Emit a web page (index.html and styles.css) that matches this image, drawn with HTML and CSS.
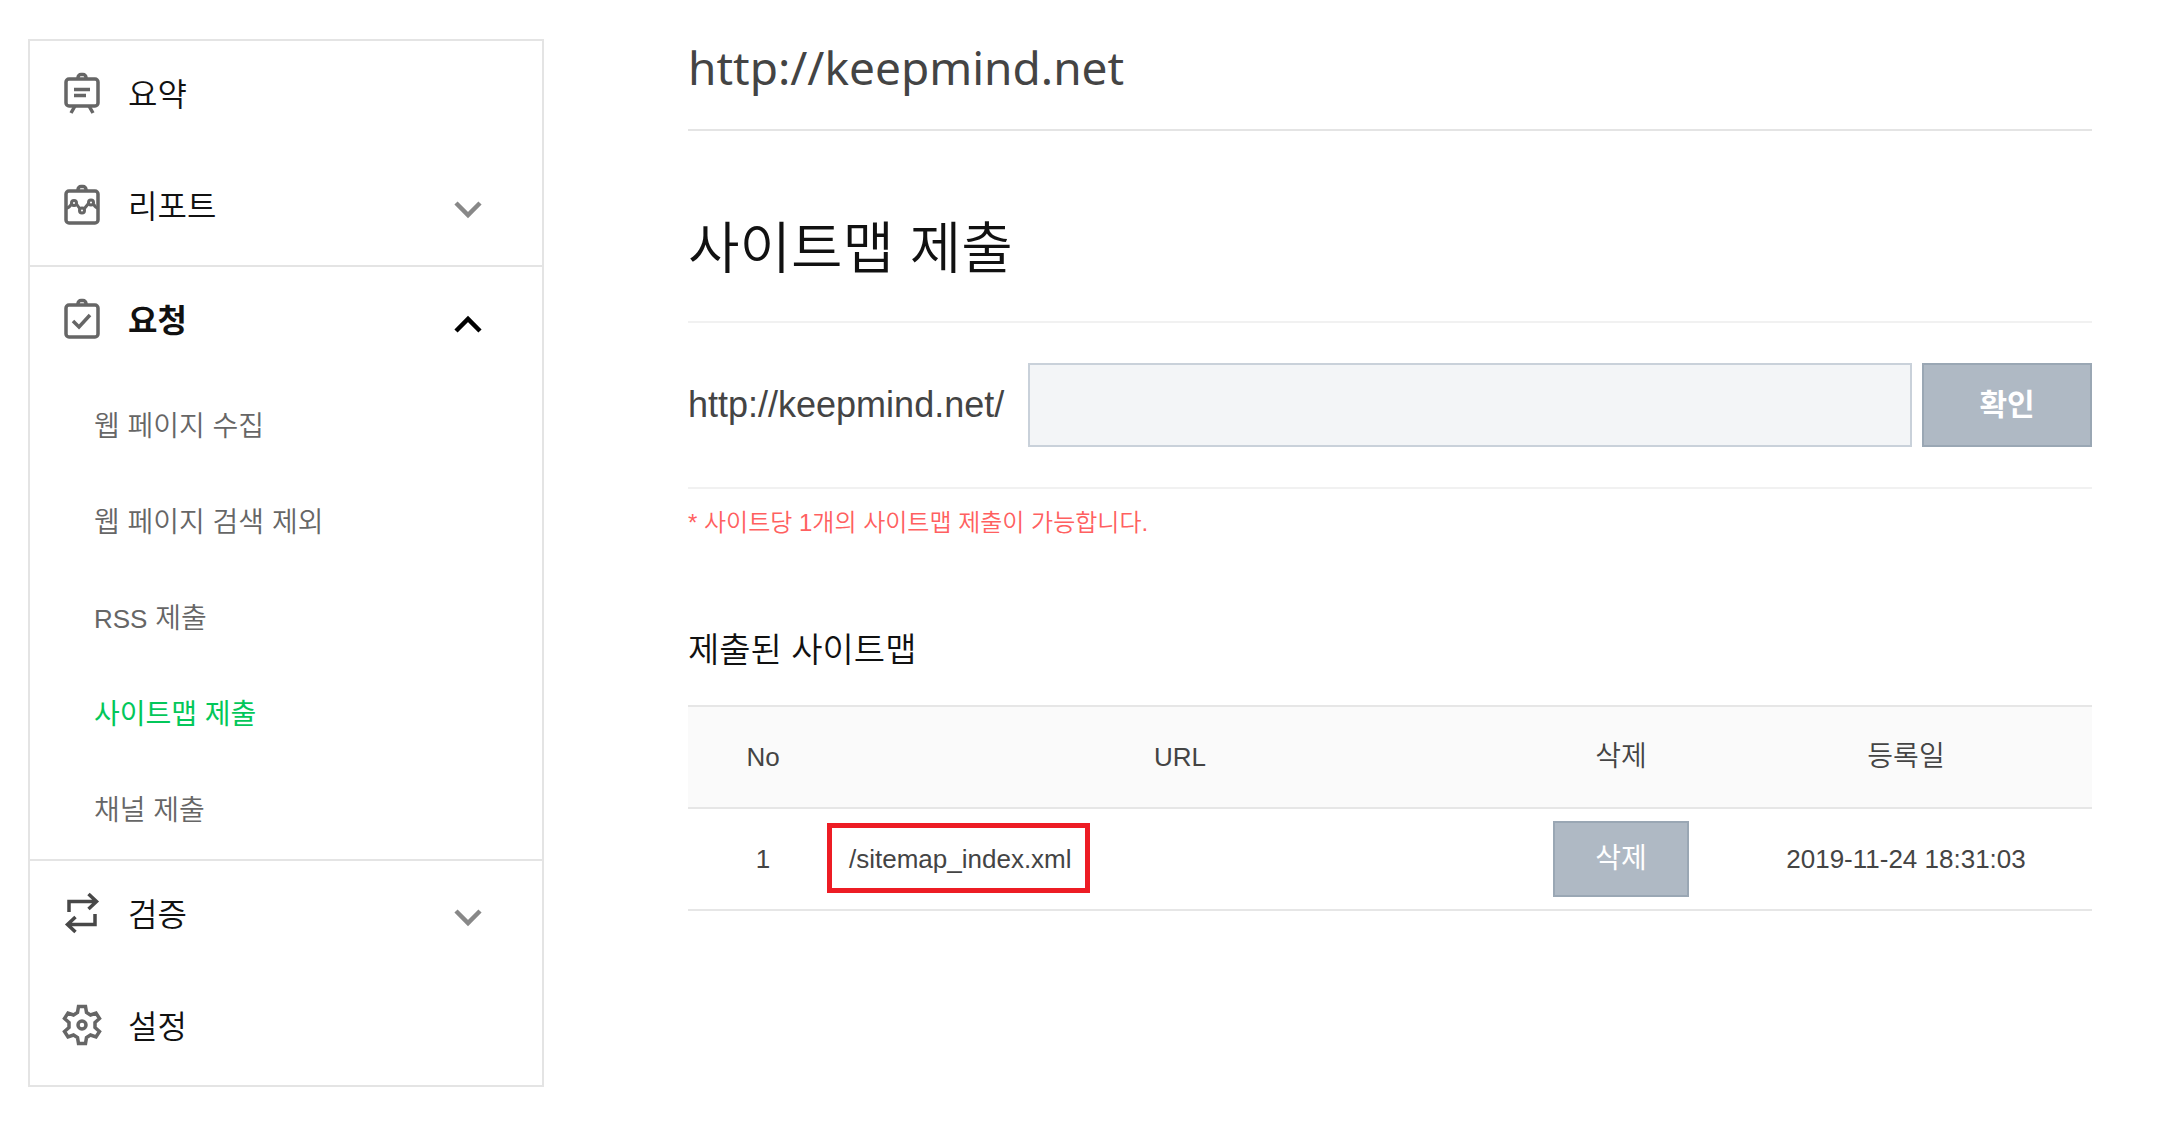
FILE: index.html
```html
<!DOCTYPE html>
<html lang="ko">
<head>
<meta charset="utf-8">
<meta name="viewport" content="width=device-width, initial-scale=1">
<title>사이트맵 제출</title>
<link rel="stylesheet" href="styles.css">
</head>
<body>
<div class="page">
  <nav class="sidebar" aria-label="메뉴">
    <ul class="group">
      <li><a class="item" href="#">
        <svg class="icon" viewBox="0 0 36 40" aria-hidden="true"><rect x="2" y="6" width="32" height="27" rx="3"/><path d="M14 5.500V4.500a3 3 0 0 1 3-3h2a3 3 0 0 1 3 3v1M10 16.500h16M10 22.500h12M11 33 7 40M25 33l4 7"/></svg>
        <span class="label">요약</span></a></li>
      <li><a class="item" href="#">
        <svg class="icon" viewBox="0 0 36 40" aria-hidden="true"><rect x="2" y="6" width="32" height="32" rx="3"/><path d="M14 5.500V4.500a3 3 0 0 1 3-3h2a3 3 0 0 1 3 3v1"/><g class="fine"><circle cx="10" cy="18" r="2.500"/><circle cx="18" cy="25.500" r="2.500"/><circle cx="27" cy="17.500" r="2.500"/><path d="M2 23c3 0 4-2 5.500-4M12.500 19l3.500 5M20 24l4.500-5.500M29.500 19c1 2 2 4 4.500 4"/></g></svg>
        <span class="label">리포트</span>
        <svg class="chevron" viewBox="0 0 28 18" aria-hidden="true"><path d="M2 2l12 12L26 2"/></svg></a></li>
    </ul>
    <ul class="group">
      <li><a class="item item-open" href="#">
        <svg class="icon" viewBox="0 0 36 40" aria-hidden="true"><rect x="2" y="6" width="32" height="32" rx="3"/><path d="M14 5.500V4.500a3 3 0 0 1 3-3h2a3 3 0 0 1 3 3v1M9 22l6 6 11-12"/></svg>
        <span class="label">요청</span>
        <svg class="chevron" viewBox="0 0 28 18" aria-hidden="true"><path d="M2 16 14 4l12 12"/></svg></a>
        <ul class="submenu">
          <li><a class="subitem" href="#">웹 페이지 수집</a></li>
          <li><a class="subitem" href="#">웹 페이지 검색 제외</a></li>
          <li><a class="subitem" href="#"><span class="latin">RSS</span> 제출</a></li>
          <li><a class="subitem subitem-current" href="#" aria-current="page">사이트맵 제출</a></li>
          <li><a class="subitem" href="#">채널 제출</a></li>
        </ul></li>
    </ul>
    <ul class="group">
      <li><a class="item" href="#">
        <svg class="icon icon-dark" viewBox="0 0 36 40" aria-hidden="true"><path d="M5 19V8.500h27M24.500 1l8 7.500-8 7.500M31 21v10.500H4M11.500 24l-8 7.500 8 7.500"/></svg>
        <span class="label">검증</span>
        <svg class="chevron" viewBox="0 0 28 18" aria-hidden="true"><path d="M2 2l12 12L26 2"/></svg></a></li>
      <li><a class="item" href="#">
        <svg class="icon" viewBox="0 0 36 40" aria-hidden="true"><path d="M14.500 1.500h7l1 6 4 2.500 5.500-2 3.500 5.500-4.500 4v5l4.500 4-3.500 5.500-5.500-2-4 2.500-1 6h-7l-1-6-4-2.500-5.500 2L.5 26.500l4.500-4v-5l-4.500-4L4 8l5.500 2 4-2.500z"/><circle cx="18" cy="20" r="4"/></svg>
        <span class="label">설정</span></a></li>
    </ul>
  </nav>

  <main class="content">
    <p class="site">http://keepmind.net</p>
    <h1 class="title">사이트맵 제출</h1>
    <form class="submit">
      <label class="prefix" for="path">http://keepmind.net/</label>
      <input class="path" id="path" type="text">
      <button class="btn btn-confirm" type="button">확인</button>
    </form>
    <p class="note">* 사이트당 1개의 사이트맵 제출이 가능합니다.</p>
    <h2 class="subtitle">제출된 사이트맵</h2>
    <table class="list">
      <colgroup><col class="col-no"><col><col class="col-delete"><col class="col-date"></colgroup>
      <thead><tr><th>No</th><th>URL</th><th class="hangul">삭제</th><th class="hangul">등록일</th></tr></thead>
      <tbody><tr>
        <td>1</td>
        <td class="url"><span class="marked">/sitemap_index.xml</span></td>
        <td><button class="btn btn-delete" type="button">삭제</button></td>
        <td>2019-11-24 18:31:03</td>
      </tr></tbody>
    </table>
  </main>
</div>
</body>
</html>
```
FILE: styles.css
```css
* { box-sizing: border-box; }

body {
  margin: 0;
  background: #fff;
  color: #444;
  font-family: "Liberation Sans", "Noto Sans CJK KR", sans-serif;
  font-size: 26px;
}

a { color: inherit; text-decoration: none; }
ul { margin: 0; padding: 0; list-style: none; }

.page {
  display: flex;
  align-items: flex-start;
  gap: 144px;
  padding: 39px 69px 38px 28px;
}

/* Side menu */
.sidebar {
  flex: 0 0 516px;
  border: 2px solid #e4e4e4;
}
.group + .group { border-top: 2px solid #e4e4e4; }

.item {
  display: flex;
  align-items: center;
  gap: 28px;
  height: 112px;
  padding: 0 60px 4px 34px;
  color: #111;
  font-size: 32px;
  font-weight: 350;
  line-height: 50px;
}
.item-open { font-weight: 700; }
.label { flex: 1; }

.icon {
  width: 36px;
  height: 40px;
  margin-bottom: 4px;
  fill: none;
  stroke: #666;
  stroke-width: 3.5;
  overflow: visible;
}
.icon-dark { stroke: #484848; }
.fine { stroke-width: 3; }
.chevron {
  width: 28px;
  height: 18px;
  margin-top: 6px;
  fill: none;
  stroke: #888;
  stroke-width: 4.5;
}
.item-open .chevron { stroke: #000; }

.subitem {
  display: block;
  height: 96px;
  padding-left: 64px;
  color: #666;
  font-size: 28px;
  font-weight: 350;
  line-height: 96px;
}
.subitem-current { color: #03c75a; font-weight: 400; }
.latin { font-size: 26px; }

/* Content */
.content { flex: 1; min-width: 0; }

.site {
  margin: 0;
  padding-bottom: 34px;
  border-bottom: 2px solid #e4e4e4;
  font-family: "Noto Sans", sans-serif;
  font-size: 46px;
  font-weight: 400;
  line-height: 56px;
}
.title {
  margin: 0;
  padding: 78px 0 32px;
  color: #111;
  font-size: 56px;
  font-weight: 350;
  line-height: 80px;
}

.submit {
  display: flex;
  align-items: center;
  padding: 40px 0;
  border: solid #f1f1f1;
  border-width: 2px 0;
}
.prefix { margin-right: 24px; font-size: 36px; }
.path {
  flex: 1;
  min-width: 0;
  height: 84px;
  margin-right: 10px;
  padding: 0 20px;
  border: 2px solid #c9d1da;
  border-radius: 0;
  background: #f3f5f7;
  font: inherit;
}
.btn {
  padding: 0;
  border: 2px solid #9aa7b4;
  background: #afb9c4;
  color: #fff;
  font-family: inherit;
  line-height: 40px;
}
.btn-confirm { width: 170px; height: 84px; font-size: 30px; font-weight: 700; }
.btn-delete { width: 136px; height: 76px; font-size: 28px; font-weight: 400; }

.note {
  margin: 0;
  padding-top: 14px;
  color: #ff6060;
  font-size: 24px;
  font-weight: 350;
  line-height: 40px;
}
.subtitle {
  margin: 0;
  padding: 82px 0 30px;
  color: #111;
  font-size: 34px;
  font-weight: 350;
  line-height: 50px;
}

.list {
  width: 100%;
  border-collapse: collapse;
  table-layout: fixed;
  text-align: center;
}
.list tr { border: solid #e6e6e6; border-width: 2px 0; }
.list th, .list td { height: 102px; padding: 0 11px; font-weight: 400; line-height: 40px; }
.list th { background: #fafafa; }
.list .hangul { font-size: 28px; font-weight: 350; }
.list .url { text-align: left; }
.col-no { width: 150px; }
.col-delete { width: 198px; }
.col-date { width: 372px; }

/* Red highlight drawn around the submitted address */
.marked { position: relative; }
.marked::after {
  content: "";
  position: absolute;
  inset: -21px -18px -19px -22px;
  border: 5px solid #ed1c24;
}
```
